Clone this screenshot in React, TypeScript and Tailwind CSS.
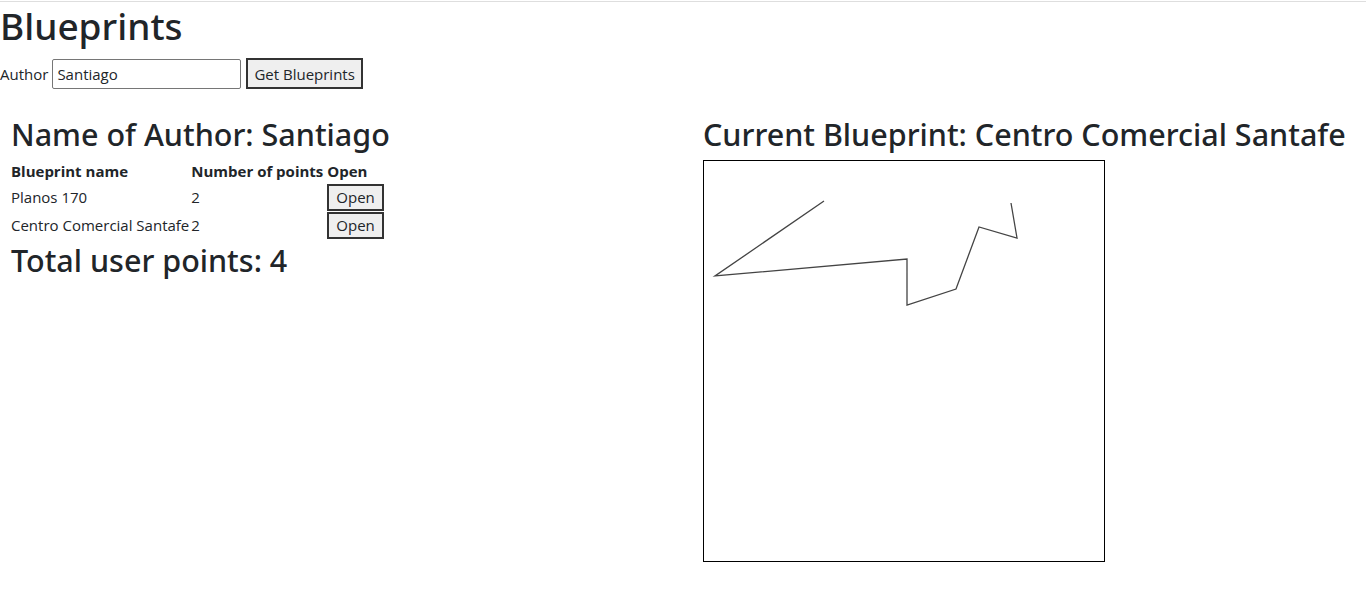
import React from 'react';

const blueprints = [
  { name: 'Planos 170', points: 2 },
  { name: 'Centro Comercial Santafe', points: 2 },
];

const drawn = '120,40 11,115 203,98 203,144 252,128 275,66 313,77 307,42';

export default function App() {
  const total = blueprints.reduce((s, b) => s + b.points, 0);

  return (
    <div className="min-h-[590px] bg-white text-[#212529] font-['Open_Sans',sans-serif] text-[15px] leading-6">
      <div className="mt-px h-px bg-[#dedede]" />
      <h1 className="font-['Noto_Sans',sans-serif] text-[37px] leading-[48px] font-medium">Blueprints</h1>

      <div className="mt-2 flex items-center">
        <label htmlFor="author">Author</label>
        <input
          id="author"
          defaultValue="Santiago"
          className="ml-[4px] h-[30px] w-[189px] rounded-[2px] border border-[#767676] px-[4px] text-[15px] outline-none"
        />
        <button className="ml-[5px] h-[31px] border-2 border-[#333] bg-[#efefef] px-[6px] text-[15px]">
          Get Blueprints
        </button>
      </div>

      <div className="mt-[26px] flex">
        <div className="w-[703px] pl-[11px]">
          <h2 className="font-['Noto_Sans',sans-serif] text-[30.5px] leading-[38px] font-medium mb-[6px]">
            Name of Author: Santiago
          </h2>
          <table className="border-collapse">
            <thead>
              <tr className="h-[22px]">
                <th className="p-0 pr-[2px] text-left font-bold">Blueprint name</th>
                <th className="p-0 text-left font-bold">Number of points</th>
                <th className="p-0 pl-[4px] text-left font-bold">Open</th>
              </tr>
            </thead>
            <tbody>
              {blueprints.map((b) => (
                <tr key={b.name} className="h-[28px]">
                  <td className="p-0 pr-[2px]">{b.name}</td>
                  <td className="p-0">{b.points}</td>
                  <td className="p-0 pl-[4px]">
                    <button className="h-[27px] border-2 border-[#333] bg-[#efefef] px-[7px] text-[15px] leading-5">
                      Open
                    </button>
                  </td>
                </tr>
              ))}
            </tbody>
          </table>
          <h2 className="font-['Noto_Sans',sans-serif] mt-[2px] text-[30.5px] leading-[38px] font-medium">
            Total user points: {total}
          </h2>
        </div>

        <div className="flex-1">
          <h2 className="font-['Noto_Sans',sans-serif] text-[30.5px] leading-[38px] font-medium mb-[7px]">
            Current Blueprint: Centro Comercial Santafe
          </h2>
          <svg width="402" height="402" className="block border border-black" viewBox="0 0 400 400">
            <polyline points={drawn} fill="none" stroke="#444" strokeWidth="1.3" />
          </svg>
        </div>
      </div>
    </div>
  );
}
